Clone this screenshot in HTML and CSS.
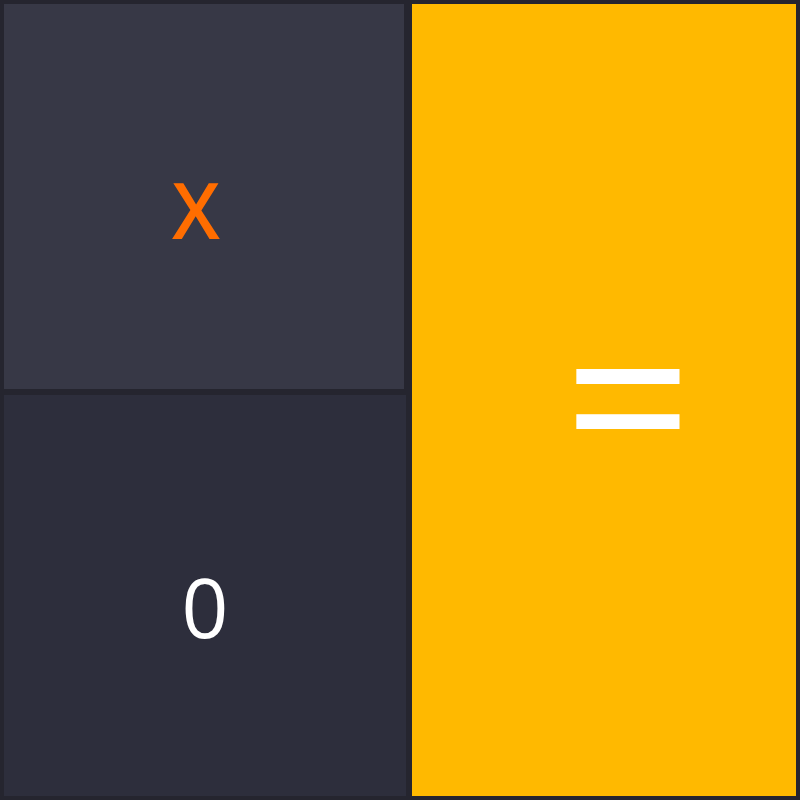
FILE: index.html
```html
<!DOCTYPE html>
<html>
<head>
<meta charset="utf-8">
<link rel="stylesheet" href="styles.css">
</head>
<body>
<div class="pad">
  <button class="key key-op">X</button>
  <button class="key key-num">0</button>
  <button class="key key-eq">=</button>
</div>
</body>
</html>
```
FILE: styles.css
```css
html, body {
  margin: 0;
  padding: 0;
  background: #25252f;
}
.pad {
  width: 800px;
  height: 800px;
  box-sizing: border-box;
  padding: 4px;
  display: grid;
  grid-template-columns: 400px 8px 384px;
  grid-template-rows: 385px 6px 401px;
}
.key {
  border: none;
  margin: 0;
  padding: 0;
  font-family: "Open Sans", sans-serif;
  line-height: normal;
  display: flex;
  align-items: center;
  justify-content: center;
}
.key-op {
  grid-column: 1;
  grid-row: 1;
  background: #373846;
  color: #ff6d00;
  font-size: 77px;
  font-weight: 600;
  padding-top: 26px;
  padding-right: 16px;
}
.key-num {
  grid-column: 1 / span 2;
  grid-row: 3;
  width: 402px;
  background: #2d2e3c;
  color: #ffffff;
  font-size: 82px;
  padding-top: 20px;
}
.key-eq {
  grid-column: 3;
  grid-row: 1 / span 3;
  background: #ffb900;
  color: #ffffff;
  font-size: 225px;
  padding-left: 48px;
  padding-bottom: 19px;
}
```
